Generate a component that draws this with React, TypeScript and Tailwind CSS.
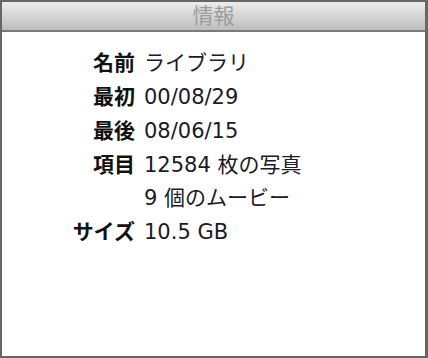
import React from "react";

const rows: { label: string; value: string }[] = [
	{ label: "名前", value: "ライブラリ" },
	{ label: "最初", value: "00/08/29" },
	{ label: "最後", value: "08/06/15" },
	{ label: "項目", value: "12584 枚の写真" },
	{ label: "", value: "9 個のムービー" },
	{ label: "サイズ", value: "10.5 GB" },
];

const font = {
	fontFamily: "'DejaVu Sans', 'Noto Sans CJK JP', sans-serif",
};

export default function App() {
	return (
		<div
			className="w-[428px] h-[358px] bg-[#666666] pl-[2px] pr-[3px] pt-[2px] pb-[2px] flex"
			style={font}
		>
			<div className="flex-1 flex flex-col bg-white">
				<div className="h-[30px] shrink-0 flex items-center justify-center bg-gradient-to-b from-[#ececec] to-[#bdbdbd] border-b-2 border-[#7a7a7a]">
					<span className="text-[21px] leading-none text-[#9c9c9c]">
						情報
					</span>
				</div>
				<div className="pt-[15px] grid grid-cols-[133px_1fr] gap-x-[9px]">
					{rows.map((r, i) => (
						<React.Fragment key={i}>
							<div className="h-[33.8px] flex items-center justify-end text-[21px] font-bold text-[#111111]">
								{r.label}
							</div>
							<div className="h-[33.8px] flex items-center text-[21px] text-[#1a1a2a]">
								{r.value}
							</div>
						</React.Fragment>
					))}
				</div>
			</div>
		</div>
	);
}
